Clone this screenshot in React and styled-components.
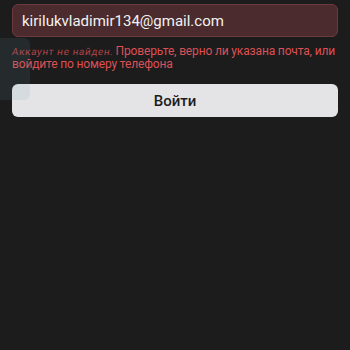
import React from "react";
import styled, { createGlobalStyle } from "styled-components";

const Global = createGlobalStyle`
  html, body {
    margin: 0;
    padding: 0;
    background: #1c1c1c;
  }
  body {
    font-family: Roboto, "Noto Sans", "Liberation Sans", sans-serif;
  }
`;

const Page = styled.div`
  position: relative;
  width: 350px;
  height: 350px;
  background: #1c1c1c;
  padding: 4px 12px 0;
  box-sizing: border-box;
  display: flex;
  flex-direction: column;
`;

const Field = styled.div`
  height: 33px;
  box-sizing: border-box;
  border: 1px solid #6b3a3d;
  border-radius: 6px;
  background: #4b2b2d;
  display: flex;
  align-items: center;
  padding: 0 9px;
  color: #f2f2f2;
  font-size: 15px;
`;

const ErrorText = styled.div`
  margin-top: 8px;
  color: #dc5055;
  font-size: 12px;
  line-height: 13px;
  letter-spacing: -0.15px;
`;

const Faded = styled.span`
  display: inline-block;
  margin-right: 2px;
  font-size: 10px;
  letter-spacing: 0.6px;
  opacity: 0.75;
  transform: skewX(-8deg);
`;

const Button = styled.button`
  margin-top: 13px;
  height: 33px;
  border: none;
  border-radius: 6px;
  background: #e4e4e6;
  color: #1c1c1e;
  font-family: inherit;
  font-size: 15px;
  font-weight: 500;
  cursor: pointer;
`;

const Ghost = styled.div`
  position: absolute;
  left: 0;
  top: 38px;
  width: 30px;
  height: 62px;
  background: rgba(110, 160, 170, 0.12);
  border-radius: 0 6px 6px 0;
  pointer-events: none;
`;

export default function App() {
  return (
    <>
      <Global />
      <Page>
        <Field>kirilukvladimir134@gmail.com</Field>
        <ErrorText>
          <Faded>Аккаунт не найден.</Faded>Проверьте, верно ли указана почта, или войдите по номеру телефона
        </ErrorText>
        <Button>Войти</Button>
        <Ghost />
      </Page>
    </>
  );
}
